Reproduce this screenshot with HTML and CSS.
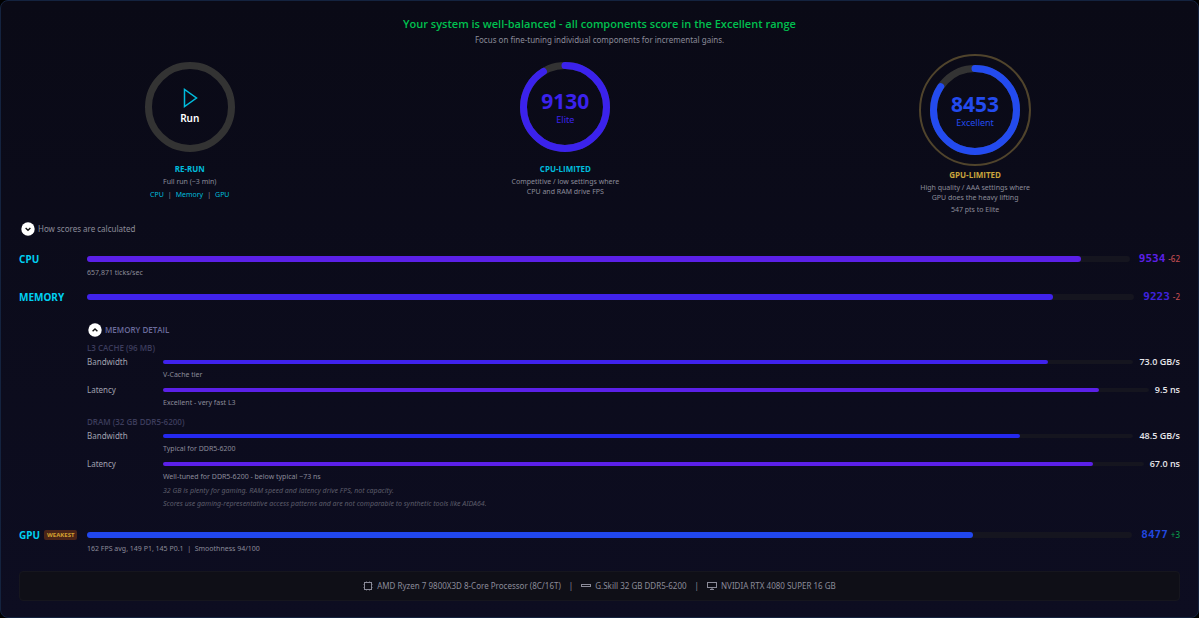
FILE: index.html
```html
<!DOCTYPE html>
<html lang="en">
<head>
<meta charset="utf-8">
<title>System score</title>
<link rel="stylesheet" href="styles.css">
</head>
<body>
<main class="panel">
  <header class="intro">
    <h1 class="headline">Your system is well-balanced - all components score in the Excellent range</h1>
    <p class="subline">Focus on fine-tuning individual components for incremental gains.</p>
  </header>

  <section class="gauges">
    <div class="gauge">
      <button class="dial" type="button">
        <svg class="ring" viewBox="0 0 90 90" aria-hidden="true"><circle class="ring-track" cx="45" cy="45" r="41.5"/></svg>
        <span class="dial-text">
          <svg class="play" viewBox="0 0 16 20" aria-hidden="true"><path d="M2.5 1.5v17L14.5 10z"/></svg>
          <span class="run">Run</span>
        </span>
      </button>
      <h2 class="gauge-title">RE-RUN</h2>
      <p class="gauge-desc">Full run (~3 min)</p>
      <p class="run-links"><a href="#cpu">CPU</a><span>|</span><a href="#memory">Memory</a><span>|</span><a href="#gpu">GPU</a></p>
    </div>
    <div class="gauge">
      <div class="dial elite">
        <svg class="ring" viewBox="0 0 90 90" aria-hidden="true"><circle class="ring-track" cx="45" cy="45" r="41.5"/><circle class="ring-fill" cx="45" cy="45" r="41.5" pathLength="10000" stroke-dasharray="9130 10000"/></svg>
        <span class="dial-text"><strong class="dial-score">9130</strong><span class="dial-tier">Elite</span></span>
      </div>
      <h2 class="gauge-title">CPU-LIMITED</h2>
      <p class="gauge-desc">Competitive / low settings where<br>CPU and RAM drive FPS</p>
    </div>
    <div class="gauge focus">
      <div class="halo">
        <div class="dial excellent">
          <svg class="ring" viewBox="0 0 90 90" aria-hidden="true"><circle class="ring-track" cx="45" cy="45" r="41.5"/><circle class="ring-fill" cx="45" cy="45" r="41.5" pathLength="10000" stroke-dasharray="8453 10000"/></svg>
          <span class="dial-text"><strong class="dial-score">8453</strong><span class="dial-tier">Excellent</span></span>
        </div>
      </div>
      <h2 class="gauge-title">GPU-LIMITED</h2>
      <p class="gauge-desc">High quality / AAA settings where<br>GPU does the heavy lifting</p>
      <p class="gauge-desc">547 pts to Elite</p>
    </div>
  </section>

  <button class="toggle how" type="button">
    <svg class="chevron" viewBox="0 0 14 14" aria-hidden="true"><circle cx="7" cy="7" r="6.7"/><path d="M4.6 6 7 8.3 9.4 6"/></svg>
    How scores are calculated
  </button>

  <section class="component" id="cpu">
    <h2 class="name">CPU</h2>
    <div class="meter"><div class="track"><div class="fill violet" style="width:95.34%"></div></div><span class="score violet-text">9534</span><span class="delta down">-62</span></div>
    <p class="note">657,871 ticks/sec</p>
  </section>

  <section class="component memory" id="memory">
    <h2 class="name">MEMORY</h2>
    <div class="meter"><div class="track"><div class="fill indigo" style="width:92.23%"></div></div><span class="score indigo-text">9223</span><span class="delta down">-2</span></div>
  </section>

  <section class="detail">
    <button class="toggle detail-toggle" type="button">
      <svg class="chevron" viewBox="0 0 14 14" aria-hidden="true"><circle cx="7" cy="7" r="6.7"/><path d="M4.6 8.2 7 5.9 9.4 8.2"/></svg>
      MEMORY DETAIL
    </button>
    <h3 class="group">L3 CACHE (96 MB)</h3>
    <div class="stat">
      <span class="stat-name">Bandwidth</span>
      <div class="meter"><div class="track thin"><div class="fill indigo" style="width:91.2%"></div></div><span class="value">73.0 GB/s</span></div>
      <p class="note">V-Cache tier</p>
    </div>
    <div class="stat">
      <span class="stat-name">Latency</span>
      <div class="meter"><div class="track thin"><div class="fill violet" style="width:94.9%"></div></div><span class="value">9.5 ns</span></div>
      <p class="note">Excellent - very fast L3</p>
    </div>
    <h3 class="group second">DRAM (32 GB DDR5-6200)</h3>
    <div class="stat">
      <span class="stat-name">Bandwidth</span>
      <div class="meter"><div class="track thin"><div class="fill royal" style="width:88.3%"></div></div><span class="value">48.5 GB/s</span></div>
      <p class="note">Typical for DDR5-6200</p>
    </div>
    <div class="stat">
      <span class="stat-name">Latency</span>
      <div class="meter"><div class="track thin"><div class="fill violet" style="width:94.8%"></div></div><span class="value">67.0 ns</span></div>
      <p class="note">Well-tuned for DDR5-6200 - below typical ~73 ns</p>
    </div>
    <p class="aside">32 GB is plenty for gaming. RAM speed and latency drive FPS, not capacity.</p>
    <p class="aside">Scores use gaming-representative access patterns and are not comparable to synthetic tools like AIDA64.</p>
  </section>

  <section class="component gpu" id="gpu">
    <h2 class="name">GPU <span class="badge">WEAKEST</span></h2>
    <div class="meter"><div class="track"><div class="fill blue" style="width:84.77%"></div></div><span class="score blue-text">8477</span><span class="delta up">+3</span></div>
    <p class="note">162 FPS avg, 149 P1, 145 P0.1 &nbsp;|&nbsp; Smoothness 94/100</p>
  </section>

  <footer class="specs">
    <svg class="spec-icon" viewBox="0 0 10 10" aria-hidden="true"><rect x="1.5" y="1.5" width="7" height="7"/><path opacity=".4" d="M3.5 0v1M6.5 0v1M3.5 9v1M6.5 9v1M0 3.5h1M0 6.5h1M9 3.5h1M9 6.5h1"/></svg>
    <span>AMD Ryzen 7 9800X3D 8-Core Processor (8C/16T)</span>
    <span class="bar">|</span>
    <svg class="spec-icon" viewBox="0 0 10 10" aria-hidden="true"><rect x=".5" y="3.5" width="9" height="2"/></svg>
    <span>G.Skill 32 GB DDR5-6200</span>
    <span class="bar">|</span>
    <svg class="spec-icon" viewBox="0 0 10 10" aria-hidden="true"><rect x=".5" y="1.5" width="9" height="5"/><path d="M5 6.5v2M3 8.5h4"/></svg>
    <span>NVIDIA RTX 4080 SUPER 16 GB</span>
  </footer>
</main>
</body>
</html>
```
FILE: styles.css
```css
* { box-sizing: border-box; }
body {
  margin: 0;
  background: #000;
  color: #8b8b99;
  font-family: "Noto Sans", "Open Sans", sans-serif;
  font-size: 7px;
  line-height: 12px;
}
h1, h2, h3, p { margin: 0; }
button {
  border: 0;
  padding: 0;
  background: none;
  color: inherit;
  font: inherit;
  cursor: pointer;
}
a { color: #00bcdc; text-decoration: none; }

.panel {
  min-height: 100vh;
  padding: 15px 18px 14px;
  border: 1px solid #14233f;
  border-radius: 8px;
  background: linear-gradient(#0a0a16, #0d0d21);
}
.intro { text-align: center; }
.headline { color: #00c04f; font-family: "Open Sans", "Noto Sans", sans-serif; font-size: 11px; font-weight: 600; line-height: 16px; }
.subline { font-size: 8px; line-height: 16px; }

.gauges { display: grid; grid-template-columns: 5fr 6fr 6fr; margin-top: 6px; }
.gauge { display: flex; flex-direction: column; align-items: center; padding-top: 8px; text-align: center; }
.gauge.focus { padding-top: 0; }
.halo { padding: 9px; border: 2px solid #50442c; border-radius: 50%; }
.dial { display: grid; place-items: center; width: 90px; height: 90px; }
.ring, .dial-text { grid-area: 1 / 1; }
.ring { width: 90px; height: 90px; transform: rotate(-90deg); fill: none; stroke-width: 7; stroke-linecap: round; }
.ring-track { stroke: #333; }
.elite { color: #3b22ec; }
.excellent { color: #234bef; }
.ring-fill { stroke: currentColor; }
.dial-text { display: flex; flex-direction: column; align-items: center; padding-top: 2px; }
.dial-score { font-size: 21px; line-height: 24px; }
.dial-tier { font-size: 9px; line-height: 14px; }
.play { width: 16px; height: 20px; fill: none; stroke: #00bcdc; stroke-width: 1.5; }
.run { color: #fff; font-size: 10px; font-weight: 600; line-height: 20px; }
.gauge-title { margin-top: 11px; color: #00bcdc; font-family: "Open Sans", "Noto Sans", sans-serif; font-size: 8px; font-weight: 700; line-height: 12px; }
.focus .gauge-title { margin-top: 3px; color: #c9a43c; }
.gauge-desc { margin-top: 2px; line-height: 10px; }
.run-links { display: flex; gap: 4px; margin-top: 2px; }

.toggle { display: flex; align-items: center; gap: 3px; line-height: 14px; }
.chevron { width: 14px; height: 14px; fill: #fff; }
.chevron path { fill: none; stroke: #111; stroke-width: 1.4; }
.how { margin: 7px 0 0 2px; font-size: 8px; }

.component { display: grid; grid-template-columns: 68px 1fr; margin-top: 15px; }
.component.memory { margin-top: 10px; }
.component.gpu { margin-top: 17px; }
.name { display: flex; align-items: center; gap: 4px; color: #00d0f2; font-size: 10px; font-weight: 700; line-height: 16px; }
.badge { padding: 0 3px; border-radius: 2px; background: #4a2418; color: #d2a030; font-size: 6px; line-height: 10px; }
.note { grid-column: 2; line-height: 12px; }
.meter { display: flex; align-items: center; }
.track { flex: 1; height: 6px; border-radius: 3px; background: #15151f; }
.track.thin { height: 4px; }
.fill { height: 100%; border-radius: inherit; }
.violet { background: #5b20e8; }
.indigo { background: #3f22ec; }
.royal { background: #2428f0; }
.blue { background: #2147ee; }
.score { margin-left: 9px; font-family: "DejaVu Sans Mono", monospace; font-size: 11px; font-weight: 700; line-height: 16px; }
.violet-text { color: #5b20e8; }
.indigo-text { color: #3f22dc; }
.blue-text { color: #2147de; }
.delta { margin-left: 3px; font-size: 8px; font-weight: 500; }
.down { color: #c04c50; }
.up { color: #0a9c4a; }

.detail { margin: 18px 0 0 68px; }
.detail-toggle { margin-left: 1px; color: #6b6b9c; font-family: "Open Sans", "Noto Sans", sans-serif; font-size: 8px; font-weight: 600; }
.group { margin-top: 4px; color: #3c3c5c; font-family: "Open Sans", "Noto Sans", sans-serif; font-size: 8px; font-weight: 600; line-height: 13px; }
.group.second { margin-top: 6px; }
.group + .stat { margin-top: 1px; }
.stat { display: grid; grid-template-columns: 76px 1fr; margin-bottom: 2px; line-height: 14px; }
.stat-name { color: #a0a0ae; font-size: 8px; }
.value { margin-left: 6px; color: #e6e6ea; font-family: "Open Sans", "Noto Sans", sans-serif; font-size: 9px; font-weight: 600; }
.aside { margin: 1px 0 0 76px; color: #5c5c6a; font-style: italic; line-height: 12px; }

.specs {
  display: flex;
  align-items: center;
  justify-content: center;
  gap: 4px;
  margin-top: 16px;
  padding: 6px;
  border: 1px solid #16161e;
  border-radius: 4px;
  background: #0f0f17;
  font-size: 8px;
  line-height: 16px;
}
.spec-icon { width: 10px; height: 10px; fill: none; stroke: #8b8b99; }
.bar { margin: 0 4px; }
```
